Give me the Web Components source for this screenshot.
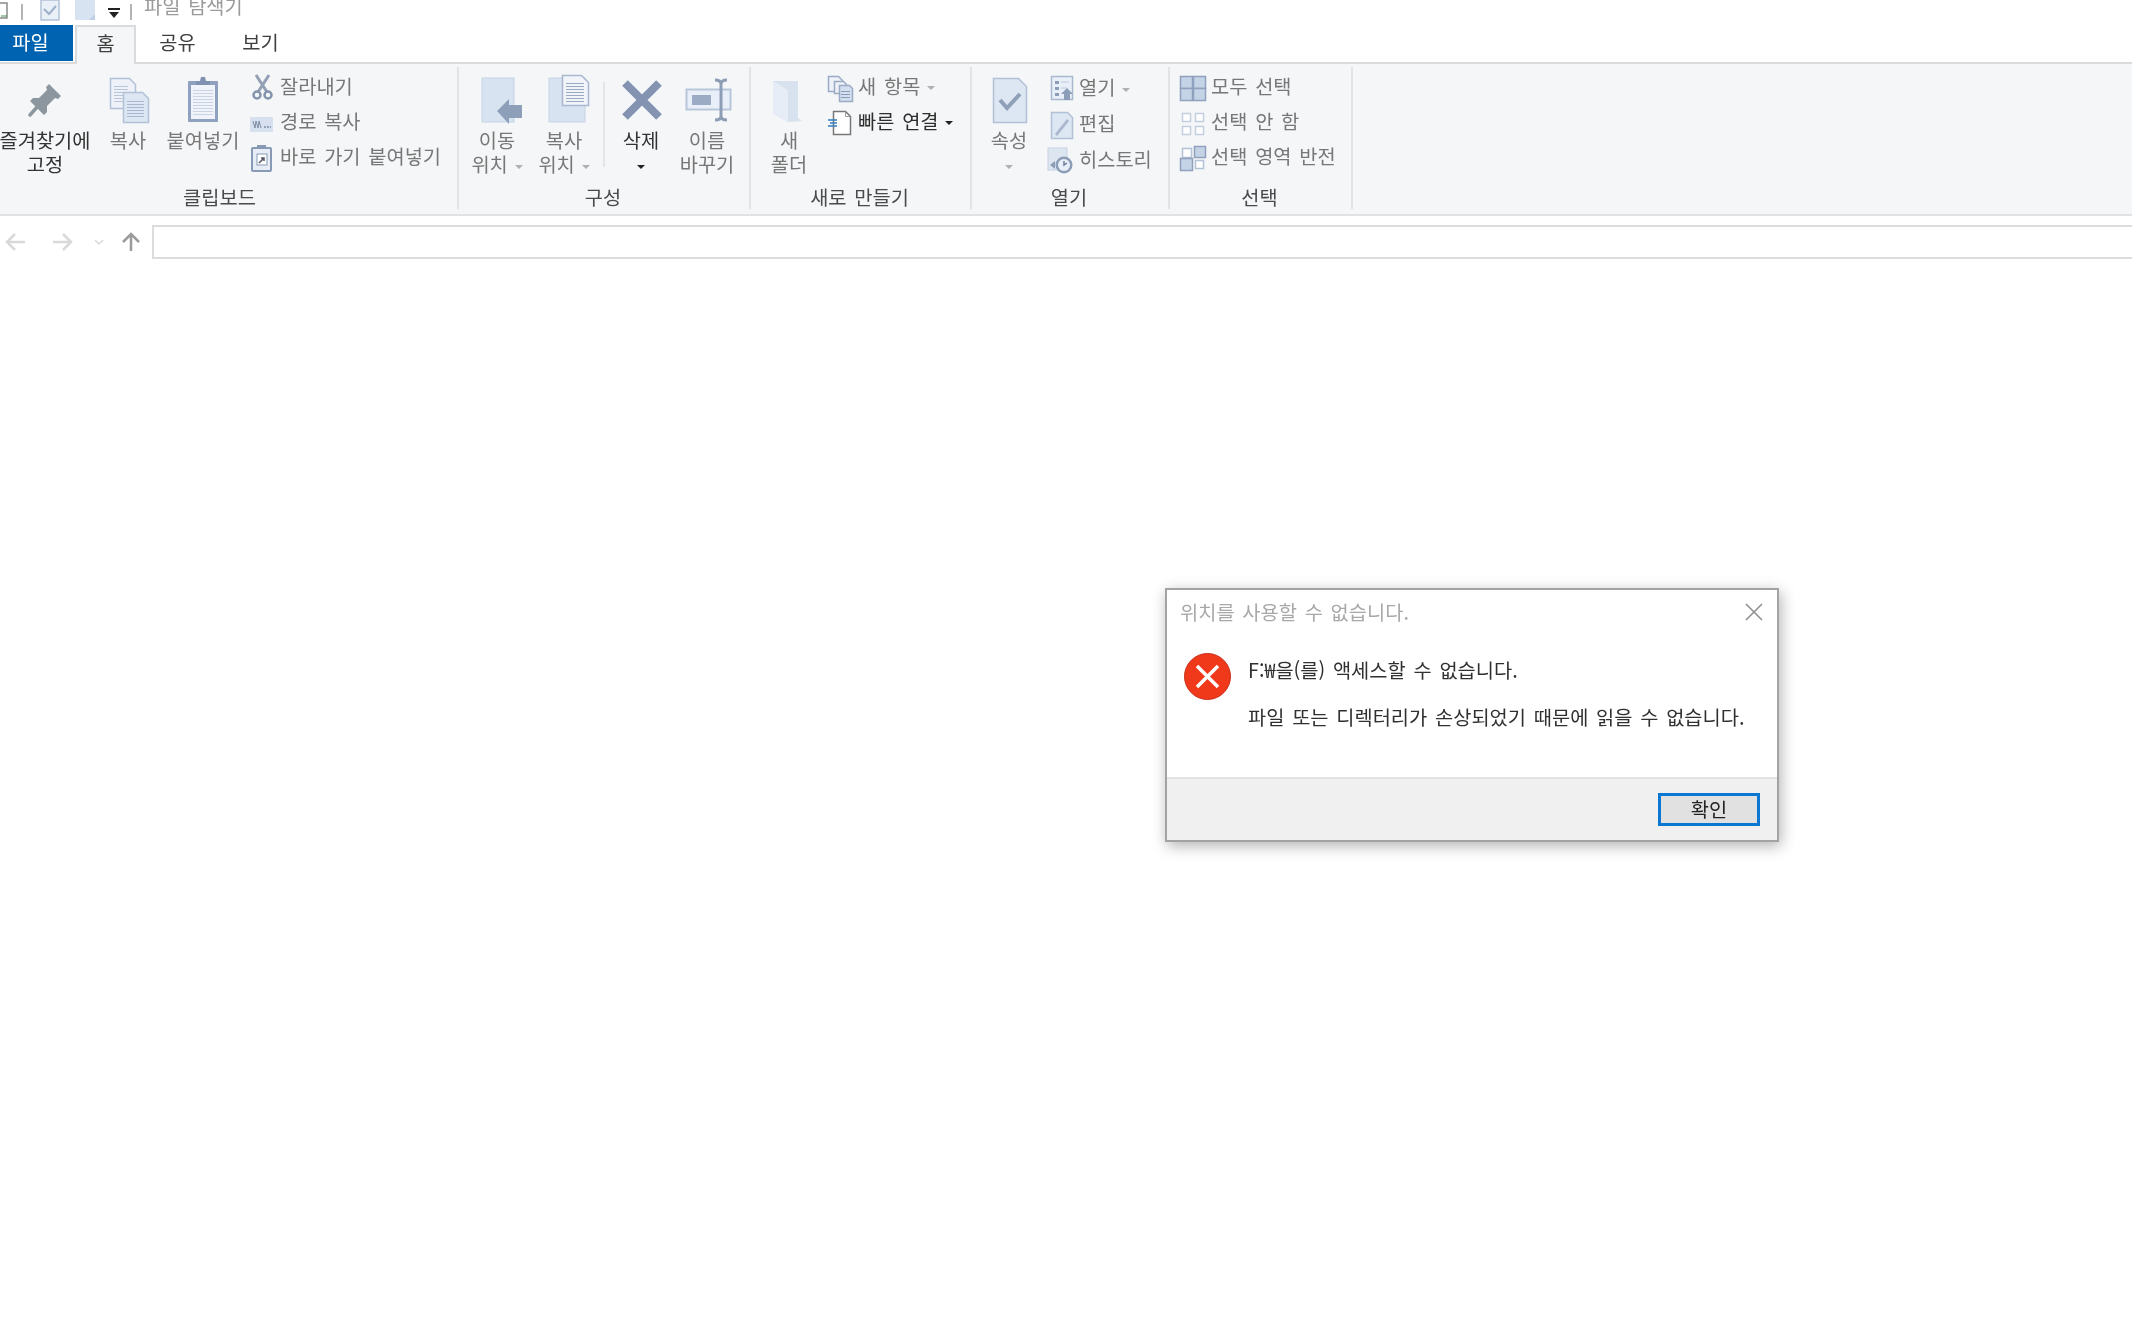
<!DOCTYPE html>
<html lang="ko">
<head>
<meta charset="utf-8">
<title>파일 탐색기</title>
<style>
  html, body { margin: 0; height: 100%; background: #fff; overflow: hidden; }
  body { font: 19.8px "Noto Sans CJK KR", "Noto Sans", sans-serif; color: #7a7a7a; word-spacing: 2.2px; filter: blur(.45px); }
</style>
</head>
<body>
<explorer-titlebar>파일 탐색기</explorer-titlebar>
<ribbon-tabs></ribbon-tabs>
<explorer-ribbon>
  <ribbon-group label="클립보드" style="width:475px;margin-left:-16px;padding-left:16px">
    <ribbon-large icon="pin" w="90" on>즐겨찾기에<br>고정</ribbon-large>
    <ribbon-large icon="copy" w="76">복사</ribbon-large>
    <ribbon-large icon="paste" w="74">붙여넣기</ribbon-large>
    <ribbon-col style="margin-left:8px">
      <ribbon-small icon="cut">잘라내기</ribbon-small>
      <ribbon-small icon="path">경로 복사</ribbon-small>
      <ribbon-small icon="shortcut">바로 가기 붙여넣기</ribbon-small>
    </ribbon-col>
  </ribbon-group>
  <ribbon-group label="구성" style="width:292px">
    <ribbon-large icon="move" w="76">이동<br>위치 <ribbon-caret></ribbon-caret></ribbon-large>
    <ribbon-large icon="copyto" w="58">복사<br>위치 <ribbon-caret></ribbon-caret></ribbon-large>
    <ribbon-divider></ribbon-divider>
    <ribbon-large icon="del" w="72" on>삭제<br><ribbon-caret></ribbon-caret></ribbon-large>
    <ribbon-large icon="rename" w="60">이름<br>바꾸기</ribbon-large>
  </ribbon-group>
  <ribbon-group label="새로 만들기" style="width:221px;padding-left:6px">
    <ribbon-large icon="folder" w="64">새<br>폴더</ribbon-large>
    <ribbon-col style="margin-left:5px">
      <ribbon-small icon="newitem">새 항목 <ribbon-caret></ribbon-caret></ribbon-small>
      <ribbon-small icon="quick" on>빠른 연결 <ribbon-caret></ribbon-caret></ribbon-small>
    </ribbon-col>
  </ribbon-group>
  <ribbon-group label="열기" style="width:198px;padding-left:7px">
    <ribbon-large icon="props" w="60">속성<br><ribbon-caret></ribbon-caret></ribbon-large>
    <ribbon-col style="margin-left:8px;--row:36px;padding-top:3px">
      <ribbon-small icon="open">열기 <ribbon-caret></ribbon-caret></ribbon-small>
      <ribbon-small icon="edit">편집</ribbon-small>
      <ribbon-small icon="history">히스토리</ribbon-small>
    </ribbon-col>
  </ribbon-group>
  <ribbon-group label="선택" style="width:183px;padding-left:9px">
    <ribbon-col>
      <ribbon-small icon="all">모두 선택</ribbon-small>
      <ribbon-small icon="none">선택 안 함</ribbon-small>
      <ribbon-small icon="invert">선택 영역 반전</ribbon-small>
    </ribbon-col>
  </ribbon-group>
</explorer-ribbon>
<explorer-nav></explorer-nav>
<error-dialog heading="위치를 사용할 수 없습니다." button="확인">
  <p>F:₩을(를) 액세스할 수 없습니다.</p>
  <p>파일 또는 디렉터리가 손상되었기 때문에 읽을 수 없습니다.</p>
</error-dialog>

<script>
"use strict";

////////////////////////////////////////////
// Icons
const PALE = "#dde6f3";
const EDGE = "#b3c1d7";
const PIN_GRAY = "#8b969e";

// page with a folded corner
const doc = (x, y, w, h, fill = PALE, stroke = EDGE) => {
  const f = Math.round(w / 4);
  return `<path d="M${x + .5} ${y + .5}h${w - f}l${f} ${f}v${h - f}h-${w}z" fill="${fill}" stroke="${stroke}" stroke-width="1.5"/>`;
};

const lines = (x, y, w, n, gap = 3, color = "#b9c6da") => {
  let out = "";
  for (let i = 0; i < n; i++) out += `<path d="M${x} ${y + i * gap + .5}h${w}" stroke="${color}"/>`;
  return out;
};

// little square, used by the select icons
const cell = (x, y, s, fill, stroke = EDGE) =>
  `<rect x="${x + .5}" y="${y + .5}" width="${s}" height="${s}" fill="${fill}" stroke="${stroke}" stroke-width="1.5"/>`;

const ICONS = {
  pin: `<path d="M28 8l12 12-3 3-3-1-8 8v6l-3 3-14-14 3-3h6l8-8-1-3z" fill="${PIN_GRAY}"/><path d="M17 30L9 39" stroke="${PIN_GRAY}" stroke-width="3.5" stroke-linecap="round"/>`,
  copy: doc(6, 2, 25, 30, "#eef2f8") + lines(10, 10, 14, 6) + doc(19, 16, 25, 30) + lines(23, 25, 17, 6, 3, "#a9b8d0"),
  paste: `<rect x="9" y="5" width="30" height="41" rx="1" fill="#8fa1be"/><rect x="12" y="9" width="24" height="34" fill="#f0f3f9"/>` + lines(14, 14, 20, 9, 3, "#c9d3e3") + `<path d="M17 9V5h4l1-4h4l1 4h4v4z" fill="#7f92b1"/>`,
  move: `<rect x="9" y="2" width="32" height="44" fill="#d8e3f2" stroke="#c5d2e5"/><path d="M24 35l12-12v6h13v13H36v6z" fill="#8d9fb9"/>`,
  copyto: `<rect x="9" y="2" width="36" height="44" fill="#d8e3f2" stroke="#c5d2e5"/>` + doc(22, -1, 26, 30, "#f1f4f9", "#a9b8d0") + lines(26, 7, 18, 7, 3, "#98a9c4"),
  del: `<path d="M8 7l34 34M42 7L8 41" stroke="#8393b1" stroke-width="8"/>`,
  rename: `<rect x="3.5" y="13.5" width="44" height="20" fill="#e9eff8" stroke="#b8c6da" stroke-width="2"/><rect x="9" y="19" width="19" height="10" fill="#9babc4"/><path d="M32 4q6 0 6 4v32q0 4-6 4M44 4q-6 0-6 4v32q0 4 6 4" fill="none" stroke="#8d9db6" stroke-width="3"/>`,
  folder: `<path d="M8 5h25v37l4 3-14 1-15-8z" fill="#d8e2ef"/><path d="M8 5l15 9v32L8 38z" fill="#e7edf6"/>`,
  props: doc(8, 2, 33, 44) + `<path d="M15 24l7 8 13-14" fill="none" stroke="#8fa0b8" stroke-width="4"/>`,
  cut: `<path d="M8 2l11 17M21 2L10 19" stroke="#93a0b5" stroke-width="3"/><circle cx="9" cy="22" r="3.5" fill="none" stroke="#8494ad" stroke-width="2.5"/><circle cx="20" cy="22" r="3.5" fill="none" stroke="#8494ad" stroke-width="2.5"/>`,
  path: `<rect x="2" y="9" width="23" height="15" fill="#d6e0ef"/><path d="M5 13l2 7 1-7 2 7 1-7 2 7" fill="none" stroke="#7f8ea6"/><path d="M16 19h7" stroke="#7f8ea6" stroke-dasharray="2 1" stroke-width="1.5"/>`,
  shortcut: `<rect x="4" y="5" width="19" height="23" rx="1" fill="#e7edf6" stroke="#8799b5" stroke-width="2"/><path d="M9 5V2h9v3z" fill="#8799b5"/><rect x="9" y="11" width="10" height="11" fill="#fff" stroke="#8799b5"/><path d="M11 20l5-5m-3 0h3v3" fill="none" stroke="#556" stroke-width="1.5"/>`,
  newitem: doc(2, 3, 14, 15, "#eef2f8", "#9aabc5") + doc(8, 8, 12, 12, "#eef2f8", "#9aabc5") + doc(13, 12, 13, 16, "#d3deee", "#9aabc5") + lines(15, 18, 9, 3, 3, "#8a9cb8"),
  quick: `<path d="M7.5 3.5h12l5 5v18h-17z" fill="#fff" stroke="#777" stroke-width="1.5"/><path d="M19.5 3.5v5h5" fill="none" stroke="#999"/><path d="M2 12h9M4 15h7M2 18h9" stroke="#2f7fc4" stroke-width="1.5"/>`,
  open: `<rect x="4.5" y="2.5" width="21" height="23" fill="#e9eff8" stroke="#a9b8cf" stroke-width="1.5"/><path d="M8 7h4v3H8zM8 13h4v3H8zM8 19h4v3H8z" fill="#8c9db8"/><path d="M14 8h8M14 14h6" stroke="#c0cbdc"/><path d="M20 14l6 6h-3v6h-6v-6h-3z" fill="#8c9db8"/>`,
  edit: doc(4, 2, 21, 26) + `<path d="M8 24l12-15 2 2-12 15z" fill="#a9b8cf"/>`,
  history: `<rect x="1" y="2" width="19" height="22" fill="#dde5f1" stroke="#c5d1e3"/><circle cx="17" cy="19" r="8.5" fill="#8c9db8"/><circle cx="17" cy="19" r="6" fill="#e9eff8"/><path d="M17 15v4l3-2" fill="none" stroke="#6d7f9b" stroke-width="1.5"/><path d="M3 19l5-4v8z" fill="#8c9db8"/>`,
  all: cell(1, 3, 12, "#c5d3e7", "#8fa1bd") + cell(14, 3, 12, "#c5d3e7", "#8fa1bd") + cell(1, 15, 12, "#c5d3e7", "#8fa1bd") + cell(14, 15, 12, "#c5d3e7", "#8fa1bd"),
  none: cell(3, 5, 8, "#fff", "#c3cfe0") + cell(16, 5, 8, "#fff", "#c3cfe0") + cell(3, 18, 8, "#fff", "#c3cfe0") + cell(16, 18, 8, "#fff", "#c3cfe0"),
  invert: cell(3, 5, 9, "#fff", "#b3c1d7") + cell(15, 3, 11, "#c5d3e7", "#8fa1bd") + cell(1, 15, 12, "#c5d3e7", "#8fa1bd") + cell(16, 17, 8, "#fff", "#b3c1d7"),
};

const svg = (name, size) =>
  `<svg width="${size}" height="${size}" viewBox="0 0 ${size} ${size}" style="display:block;overflow:visible">${ICONS[name]}</svg>`;

////////////////////////////////////////////
// Base class: every element just renders a string into an open shadow root
class ShadowEl extends HTMLElement {
  constructor() {
    super();
    this._root = this.attachShadow({ mode: "open" });
  }
  connectedCallback() {
    this._root.innerHTML = this.render();
  }
}

class ExplorerTitlebar extends ShadowEl {
  render() {
    return `
      <style>
        :host { display: block; height: 25px; overflow: hidden; position: relative; color: #9a9a9a; }
        .i { position: absolute; bottom: 5px; }
        .txt { position: absolute; left: 144px; bottom: 2px; line-height: 34px; }
      </style>
      <svg class="i" style="left:0" width="10" height="20"><path d="M-4 3h11v15h-11z" fill="#fff" stroke="#8a8a8a" stroke-width="1.5"/><path d="M1 16h6" stroke="#3f8f4a"/></svg>
      <svg class="i" style="left:21px" width="3" height="16"><path d="M1 0v16" stroke="#9a9a9a" stroke-width="1.5"/></svg>
      <svg class="i" style="left:40px;bottom:4px" width="20" height="21"><path d="M1 0h18v20H1z" fill="#eaf0f8" stroke="#b3c1d7" stroke-width="1.5"/><path d="M4 9l5 5 7-8" fill="none" stroke="#9db0c9" stroke-width="2"/></svg>
      <svg class="i" style="left:75px;bottom:4px" width="21" height="21"><path d="M0 0h20v20H0z" fill="#d8e3f2"/><path d="M14 20l6-6v6z" fill="#c2d0e3"/></svg>
      <svg class="i" style="left:107px" width="14" height="13"><path d="M1 2h12" stroke="#222" stroke-width="2"/><path d="M2 5h10l-5 6z" fill="#222"/></svg>
      <svg class="i" style="left:130px" width="3" height="16"><path d="M1 0v16" stroke="#9a9a9a" stroke-width="1.5"/></svg>
      <span class="txt"><slot></slot></span>
    `;
  }
}

class RibbonTabs extends ShadowEl {
  render() {
    return `
      <style>
        :host { display: flex; height: 39px; box-sizing: border-box; border-bottom: 2px solid #dadbdc; color: #3f3f3f; }
        div { text-align: center; line-height: 34px; height: 36px; box-sizing: border-box; }
        .file { width: 73px; padding-right: 12px; background: #0063b1; color: #fff; margin-right: 2px; }
        .home { width: 61px; height: 39px; background: #f5f6f7; border: 2px solid #dadbdc; border-bottom: 0; line-height: 32px; }
        .tab { width: 83px; }
      </style>
      <div class="file">파일</div><div class="home">홈</div><div class="tab">공유</div><div class="tab">보기</div>
    `;
  }
}

class ExplorerRibbon extends ShadowEl {
  render() {
    return `
      <style>
        :host { display: flex; height: 152px; box-sizing: border-box; padding-top: 3px; background: #f5f6f7; border-bottom: 2px solid #e1e2e3; overflow: hidden; }
      </style>
      <slot></slot>
    `;
  }
}

class RibbonGroup extends ShadowEl {
  render() {
    return `
      <style>
        :host { display: flex; flex-direction: column; flex: none; height: 142px; box-sizing: border-box; border-right: 2px solid #e2e3e4; }
        .content { display: flex; height: 118px; }
        .label { line-height: 24px; text-align: center; color: #4a4a4a; padding-right: 2px; }
      </style>
      <div class="content"><slot></slot></div>
      <div class="label">${this.getAttribute("label")}</div>
    `;
  }
  connectedCallback() {
    super.connectedCallback();
    // the caption centres on the group's full box, not on its padded content
    if (this.style.paddingLeft) {
      this._root.querySelector(".label").style.marginLeft = `-${this.style.paddingLeft}`;
    }
  }
}

class RibbonLarge extends ShadowEl {
  render() {
    const on = this.hasAttribute("on");
    return `
      <style>
        :host { display: flex; flex-direction: column; align-items: center; flex: none; width: ${this.getAttribute("w")}px; color: ${on ? "#333" : "#777"}; }
        .icon { width: 48px; height: 48px; padding-top: 9px; margin-bottom: 4px; }
        .txt { line-height: 24px; text-align: center; white-space: nowrap; }
      </style>
      <div class="icon">${svg(this.getAttribute("icon"), 48)}</div>
      <div class="txt"><slot></slot></div>
    `;
  }
}

class RibbonCol extends ShadowEl {
  render() {
    return `
      <style>
        :host { display: flex; flex-direction: column; flex: none; padding-top: 2px; }
      </style>
      <slot></slot>
    `;
  }
}

class RibbonSmall extends ShadowEl {
  render() {
    const on = this.hasAttribute("on");
    return `
      <style>
        :host { display: flex; align-items: center; gap: 4px; height: var(--row, 35px); white-space: nowrap; color: ${on ? "#2e2e2e" : "#777"}; }
        .icon { width: 28px; height: 28px; flex: none; }
        .txt { margin-bottom: 3px; }
      </style>
      <div class="icon">${svg(this.getAttribute("icon"), 28)}</div>
      <div class="txt"><slot></slot></div>
    `;
  }
}

class RibbonCaret extends ShadowEl {
  render() {
    return `
      <style>
        :host { display: inline-block; width: 0; height: 0; vertical-align: middle; margin-left: -1px; border: 4px solid transparent; border-bottom: 0; border-top: 4.5px solid currentColor; opacity: .55; }
        :host-context(ribbon-large[on]), :host-context(ribbon-small[on]) { opacity: 1; border-top-color: #222; }
      </style>
    `;
  }
}

class RibbonDivider extends ShadowEl {
  render() {
    return `
      <style>
        :host { display: block; flex: none; width: 2px; height: 85px; margin: 15px 0 0 10px; background: #e4e5e6; }
      </style>
    `;
  }
}

class ExplorerNav extends ShadowEl {
  render() {
    return `
      <style>
        :host { display: flex; align-items: center; height: 46px; box-sizing: border-box; padding: 9px 0 3px 0; overflow: hidden; }
        svg { flex: none; display: block; }
        .box { flex: 1; height: 34px; box-sizing: border-box; margin: 0 -4px 0 11px; border: 2px solid #dcdcdc; background: #fff; }
      </style>
      <svg width="141" height="24" fill="none" stroke-width="2.5">
        <path d="M25 12H8m7-8l-8 8 8 8" stroke="#d9d9d9"/>
        <path d="M53 12h17m-7-8l8 8-8 8" stroke="#d9d9d9"/>
        <path d="M95 10l4 4 4-4" stroke="#d9d9d9" stroke-width="1.5"/>
        <path d="M131 21V4m-8 8l8-8 8 8" stroke="#9b9b9b"/>
      </svg>
      <div class="box"></div>
    `;
  }
}

class ErrorDialog extends ShadowEl {
  render() {
    return `
      <style>
        :host { position: absolute; left: 1165px; top: 588px; width: 614px; height: 254px; box-sizing: border-box; display: flex; flex-direction: column; background: #fff; border: 2px solid #a3a3a3; box-shadow: 2px 4px 14px rgba(0,0,0,.3); }
        .head { display: flex; align-items: center; justify-content: space-between; height: 44px; box-sizing: border-box; padding: 0 14px 2px 13px; color: #a8a8a8; flex: none; }
        .close { margin-top: 2px; }
        .main { flex: 1; display: flex; gap: 17px; padding: 19px 0 0 17px; color: #303030; }
        .badge { width: 47px; height: 47px; flex: none; }
        ::slotted(p) { margin: 0 0 13px; line-height: 34px; white-space: nowrap; }
        .foot { flex: none; height: 63px; box-sizing: border-box; display: flex; align-items: center; justify-content: flex-end; padding-right: 17px; background: #f0f0f0; border-top: 2px solid #e3e3e3; }
        .ok { width: 102px; height: 33px; box-sizing: border-box; border: 3px solid #0a78d2; background: #e1e1e1; color: #222; text-align: center; line-height: 25px; }
      </style>
      <div class="head">
        <span>${this.getAttribute("heading")}</span>
        <svg class="close" width="18" height="18" fill="none" stroke="#8f8f8f" stroke-width="1.6"><path d="M1 1l16 16M17 1L1 17"/></svg>
      </div>
      <div class="main">
        <svg class="badge" viewBox="0 0 47 47">
          <circle cx="23.5" cy="23.5" r="23" fill="#f0391a" stroke="#c9301a"/>
          <path d="M13 13l21 21M34 13L13 34" stroke="#fff" stroke-width="3.5"/>
        </svg>
        <div class="msg"><slot></slot></div>
      </div>
      <div class="foot"><div class="ok">${this.getAttribute("button")}</div></div>
    `;
  }
}

////////////////////////////////////////////
// Executed Code
customElements.define("explorer-titlebar", ExplorerTitlebar);
customElements.define("ribbon-tabs", RibbonTabs);
customElements.define("explorer-ribbon", ExplorerRibbon);
customElements.define("ribbon-group", RibbonGroup);
customElements.define("ribbon-large", RibbonLarge);
customElements.define("ribbon-col", RibbonCol);
customElements.define("ribbon-small", RibbonSmall);
customElements.define("ribbon-caret", RibbonCaret);
customElements.define("ribbon-divider", RibbonDivider);
customElements.define("explorer-nav", ExplorerNav);
customElements.define("error-dialog", ErrorDialog);
</script>
</body>
</html>
